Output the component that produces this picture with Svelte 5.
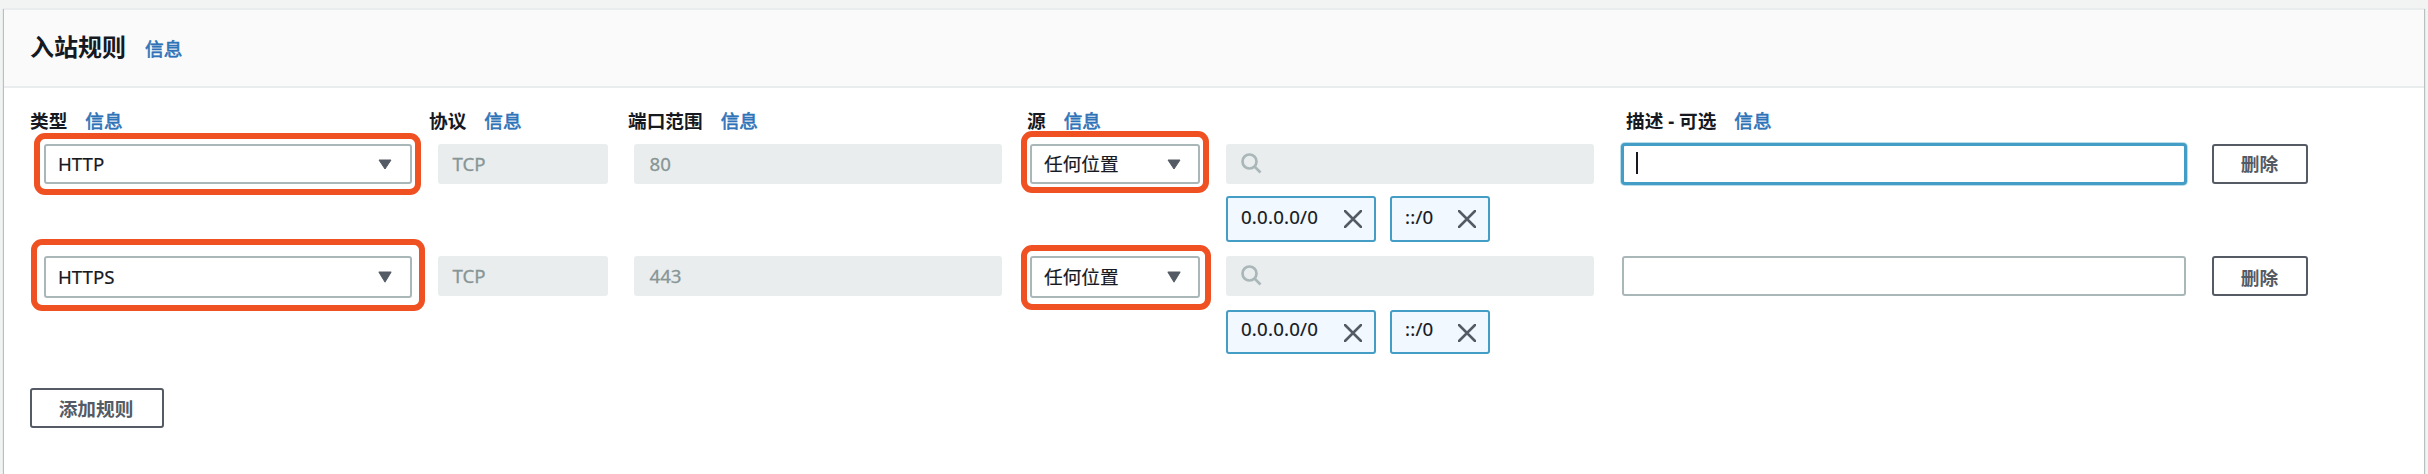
<script>
  const labels = ['类型', '协议', '端口范围', '源', '描述 - 可选'];
  const rules = [
    { type: 'HTTP', port: '80', focused: true },
    { type: 'HTTPS', port: '443', focused: false }
  ];
  const sources = ['0.0.0.0/0', '::/0'];
</script>

<main>
  <section class="card">
    <header>
      <h2>入站规则</h2>
      <a class="info">信息</a>
    </header>

    <div class="labels">
      {#each labels as label}
        <div class="label"><b>{label}</b><a class="info">信息</a></div>
      {/each}
    </div>

    {#each rules as rule, i}
      <div class="rule r{i + 1}">
        <div class="select type">
          <span>{rule.type}</span>
          <svg class="caret" viewBox="0 0 14 11" preserveAspectRatio="none"><path d="M1 1h12L7 10z" /></svg>
          <i class="mark"></i>
        </div>
        <div class="off proto">TCP</div>
        <div class="off port">{rule.port}</div>
        <div class="select source">
          <span>任何位置</span>
          <svg class="caret" viewBox="0 0 14 11" preserveAspectRatio="none"><path d="M1 1h12L7 10z" /></svg>
          <i class="mark"></i>
        </div>
        <div class="lookup">
          <div class="off search">
            <svg viewBox="0 0 21 21"><circle cx="8.500" cy="8.500" r="7" /><path d="M13.500 13.500l6 6" /></svg>
          </div>
          <div class="tokens">
            {#each sources as source}
              <div class="token">
                <span>{source}</span>
                <svg viewBox="0 0 18 18" preserveAspectRatio="none"><path d="M1 1l16 16M17 1L1 17" /></svg>
              </div>
            {/each}
          </div>
        </div>
        <div class="desc" class:focused={rule.focused}>
          {#if rule.focused}<i class="cursor"></i>{/if}
        </div>
        <button class="remove">删除</button>
      </div>
    {/each}

    <button class="add">添加规则</button>
  </section>
</main>

<style>
  :global(body) {
    background: #f2f3f3;
  }
  main {
    box-sizing: border-box;
    height: 474px;
    padding: 8px 4px 0;
    overflow: hidden;
    font-family: 'Noto Sans', 'Noto Sans CJK SC', sans-serif;
    font-size: 18.67px;
    line-height: 24px;
    color: #16191f;
  }
  .card {
    box-sizing: border-box;
    height: 500px;
    background: #fff;
    border-top: 2px solid #eaeded;
    box-shadow: -1px 1px 1px #b9c0c0, 1px 1px 1px #b9c0c0;
  }
  header {
    box-sizing: border-box;
    height: 78px;
    display: flex;
    align-items: baseline;
    gap: 19px;
    padding: 21px 26px 0;
    background: #fafafa;
    border-bottom: 2px solid #eaeded;
  }
  h2 {
    margin: 0;
    font-size: 24px;
    line-height: 32px;
    font-weight: 700;
  }
  .info {
    color: #2e73b8;
    -webkit-text-stroke: 0.6px #2e73b8;
  }
  .labels {
    display: grid;
    grid-template-columns: 399px 199px 399px 599px auto;
    height: 24px;
    padding: 21px 0 11px 26px;
  }
  .label {
    display: flex;
    gap: 18px;
    white-space: nowrap;
  }
  .rule {
    display: flex;
    align-items: flex-start;
    height: 112px;
    padding-left: 40px;
  }
  .select,
  .off,
  .desc,
  button {
    box-sizing: border-box;
    height: 40px;
    border-radius: 3px;
    display: flex;
    align-items: center;
  }
  .select {
    position: relative;
    justify-content: space-between;
    border: 2px solid #aab7b8;
    padding: 0 18px 0 12px;
    background: #fff;
    -webkit-text-stroke: 0.2px #16191f;
  }
  .r2 .select {
    height: 42px;
  }
  .type {
    width: 368px;
    margin-right: 26px;
  }
  .source {
    width: 170px;
    margin-right: 26px;
    padding-right: 17px;
  }
  .caret {
    width: 14px;
    height: 11px;
    fill: #545b64;
    stroke: #545b64;
    stroke-linejoin: round;
  }
  .r2 .caret {
    height: 12px;
  }
  .mark {
    position: absolute;
    border: 6px solid #f05123;
    border-radius: 11px;
  }
  .r1 .type .mark { inset: -13px -11px -13px -12px; }
  .r2 .type .mark { inset: -19px -15px -15px -15px; }
  .r1 .source .mark { inset: -15px -11px -11px -11px; }
  .r2 .source .mark { inset: -13px -13px -14px -11px; }
  .off {
    background: #eaeded;
    color: #879596;
    padding-left: 15px;
    -webkit-text-stroke: 0.3px #879596;
  }
  .proto {
    width: 170px;
    margin-right: 26px;
    padding-left: 14.5px;
  }
  .off.proto,
  .off.port {
    padding-bottom: 1px;
  }
  .port {
    width: 368px;
    margin-right: 28px;
    padding-left: 15.5px;
  }
  .lookup {
    width: 368px;
    margin-right: 28px;
  }
  .search svg {
    width: 21px;
    height: 21px;
    margin-top: -1px;
    fill: none;
    stroke: #aab7b8;
    stroke-width: 2.7;
  }
  .tokens {
    display: flex;
    gap: 14px;
    margin-top: 12px;
  }
  .token {
    box-sizing: border-box;
    height: 46px;
    display: flex;
    justify-content: space-between;
    padding: 7px 12px 0 13px;
    background: #f1f8ff;
    border: 2px solid #449dc5;
    border-radius: 3px;
    letter-spacing: 0.2px;
    -webkit-text-stroke: 0.2px #16191f;
  }
  .token:first-child { width: 150px; }
  .token:last-child { width: 100px; }
  .token svg {
    width: 18px;
    height: 18px;
    margin-top: 5px;
    fill: none;
    stroke: #545b64;
    stroke-width: 2.5;
    stroke-linecap: round;
  }
  .r2 .tokens { margin-top: 14px; }
  .r2 .token { height: 44px; padding-top: 5px; }
  .r2 .token svg { margin-top: 7px; }
  .desc {
    width: 564px;
    margin-right: 26px;
    border: 2px solid #aab7b8;
    background: #fff;
    padding-left: 12px;
  }
  .desc.focused {
    border-color: #449dc5;
    box-shadow: 0 0 0 1px #449dc5, 0 0 0 2px #b9dcea;
  }
  .cursor {
    width: 2px;
    height: 22px;
    margin-top: -2px;
    background: #16191f;
  }
  button {
    justify-content: center;
    border: 2px solid #545b64;
    background: #fff;
    color: #545b64;
    font: inherit;
    font-weight: 700;
    padding: 0 1px 0 0;
  }
  .remove {
    width: 96px;
    padding-bottom: 1px;
  }
  .r2 .remove {
    padding-top: 3px;
    padding-bottom: 0;
  }
  .add {
    width: 134px;
    margin: 20px 0 0 26px;
    padding-top: 2px;
    padding-right: 2px;
  }
</style>
